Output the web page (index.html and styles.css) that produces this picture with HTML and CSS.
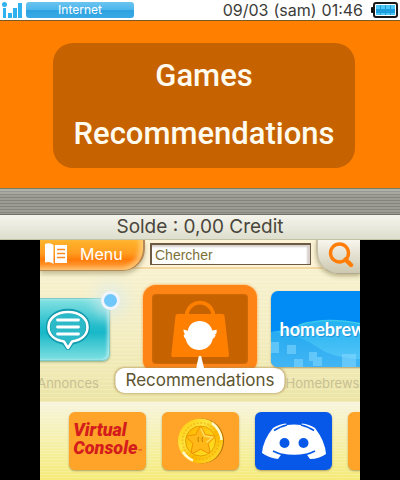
FILE: index.html
```html
<!DOCTYPE html>
<html lang="fr">
<head>
<meta charset="utf-8">
<meta name="viewport" content="width=device-width, initial-scale=1">
<title>Recommendations</title>
<link rel="stylesheet" href="styles.css">
</head>
<body>
<header class="status">
  <svg class="signal" viewBox="0 0 20 16" aria-hidden="true">
    <circle cx="2.5" cy="2.6" r="2.5"/>
    <path d="M1 6h3v10H1zM6 11h4v5H6zM11 6h4v10h-4zM16 1h4v15h-4z"/>
  </svg>
  <span class="network">Internet</span>
  <span class="clock"><span>09/03</span><span>(sam)</span><time>01:46</time></span>
  <svg class="battery" viewBox="0 0 27 16" aria-hidden="true">
    <rect x="0" y="5" width="4" height="6" rx="1" fill="#111"/>
    <rect x="3" y="1" width="23" height="14" rx="2" fill="#fff" stroke="#181818" stroke-width="2"/>
    <rect x="5" y="3" width="19" height="10" fill="#4cc8f8"/>
    <rect x="5" y="7" width="19" height="4" fill="#1b9fe0"/>
    <path d="M9.500 3v10M14.500 3v10M19.500 3v10" stroke="#2a9bd0" fill="none"/>
  </svg>
</header>

<section class="banner">
  <h1 class="banner-title"><span>Games</span><span>Recommendations</span></h1>
</section>
<div class="grille"></div>
<p class="balance">Solde : 0,00 Credit</p>

<main class="touch">
  <form class="toolbar">
    <button class="menu" type="button">
      <svg class="menu-icon" viewBox="0 0 22 21" aria-hidden="true">
        <path d="M0 1Q5 -1 8.500 2V21Q5 18 0 19.500z" fill="#fff"/>
        <path d="M10 2h12v18H10z" fill="#fff"/>
        <path d="M12 6.500h8M12 10.500h8M12 14.500h8" stroke="#ff8a20" stroke-width="1.300"/>
      </svg>
      <span>Menu</span>
    </button>
    <input class="query" type="text" placeholder="Chercher" aria-label="Chercher">
    <button class="search" type="submit" aria-label="Chercher">
      <svg class="search-icon" viewBox="0 0 26 26" aria-hidden="true">
        <circle cx="11.500" cy="11" r="9" fill="none" stroke="#ff7d08" stroke-width="3.400"/>
        <path d="M17.500 17.500l5.500 5.500" stroke="#ff7d08" stroke-width="4.400" stroke-linecap="round"/>
      </svg>
    </button>
  </form>

  <nav class="carousel">
    <a class="item news" href="#annonces">
      <span class="tile">
        <svg class="bubble" viewBox="0 0 44 42" aria-hidden="true">
          <path d="M18 34.500C9 33 2 27.500 2 19 2 9.500 11 3 22 3s20 6.500 20 16c0 8.500-7 14-16 15.500L22 40z" fill="#2cb9c8" stroke="#109aac" stroke-width="4.500"/>
          <path d="M18 33.500C9 32 2.500 27 2.500 19 2.500 10 11 4 22 4s19.500 6 19.500 15c0 8-6.500 13-15.500 14.500L22 40z" fill="none" stroke="#fff" stroke-width="2.600" stroke-linejoin="round"/>
          <path d="M11.500 12h21M11.500 19h21M11.500 26h21" stroke="#fff" stroke-width="2.800" stroke-linecap="round"/>
        </svg>
        <i class="dot"></i>
      </span>
      <span class="name">Annonces</span>
    </a>
    <a class="item current" href="#recommendations">
      <span class="tile">
        <svg class="bag" viewBox="0 0 58 60" aria-hidden="true">
          <path d="M16 18v-3.500a13.500 13.500 0 0 1 26 0V18" fill="none" stroke="#ff8000" stroke-width="3.800"/>
          <path d="M6.500 16h45q1.500 0 2 1.800L58 57q0 2-1.500 2h-55Q0 59 .3 57L4.500 17.800Q5 16 6.500 16z" fill="#ff8000"/>
          <path d="M12.500 31.500l4.300 1.200C18 26.500 22.500 23 28.500 23c6.500 0 11.500 4 12.800 9.500l4.400-.7q.6 3-1.700 5l.7.800q-1.200 2.200-3 3.500C40.500 47.500 35 52 28.500 52c-7.200 0-12.500-4.500-13.800-11q-2.200-1.200-2-3.800.7-.5 1.100-1.200-1.500-2-1.300-4.500z" fill="#fff"/>
        </svg>
      </span>
      <span class="name">Recommendations</span>
    </a>
    <a class="item brews" href="#homebrews">
      <span class="tile">
        <svg class="waves" viewBox="0 0 103 76" aria-hidden="true">
          <defs>
            <linearGradient id="sea" x1="0" y1="0" x2="0" y2="1">
              <stop offset="0" stop-color="#22b2f2"/><stop offset="1" stop-color="#5cc8f8"/>
            </linearGradient>
          </defs>
          <path d="M0 0h103v76H0z" fill="#008cf4"/>
          <path d="M0 41Q16 39 28 34 58 24 103 36V76H0z" fill="url(#sea)"/>
          <path d="M28 34Q60 24 103 36" fill="none" stroke="#3cc8ec" stroke-width="1.500"/>
          <path d="M0 41Q26 42 46 56T103 68V76H0z" fill="#1899ee" opacity=".4"/>
          <g fill="#8cdcff" opacity=".5">
            <path d="M0 51h8v11H0zM16 54h9v9h-9zM23 68h9v8h-9zM38 61h8v9h-8zM42 66h9v9h-9zM71 63h14v13H71z"/>
          </g>
        </svg>
        <span class="wordmark">homebrew</span>
      </span>
      <span class="name">Homebrews</span>
    </a>
  </nav>

  <nav class="shelf">
    <a class="app console" href="#virtual-console"><span>Virtual<br>Console<small>™</small></span></a>
    <a class="app" href="#coins" aria-label="Coins">
      <svg class="coin" viewBox="0 0 48 48" aria-hidden="true">
        <defs>
          <linearGradient id="rim" x1="0" y1="0" x2="1" y2="1">
            <stop offset="0" stop-color="#ffc400"/><stop offset=".35" stop-color="#ffe640"/>
            <stop offset=".6" stop-color="#ffb800"/><stop offset="1" stop-color="#ffe33a"/>
          </linearGradient>
          <linearGradient id="face" x1="0" y1="0" x2="1" y2="1">
            <stop offset="0" stop-color="#ffb400"/><stop offset="1" stop-color="#ffe428"/>
          </linearGradient>
        </defs>
        <circle cx="24.500" cy="24" r="22.500" fill="#a86a08"/>
        <circle cx="23.500" cy="24" r="22.500" fill="url(#rim)"/>
        <path d="M35 6q9 7 9.500 17M6 35q4 6 10 8.500" fill="none" stroke="#fffbd0" stroke-width="2.500"/>
        <circle cx="23.500" cy="24" r="18" fill="none" stroke="#d99a00" stroke-width="2" stroke-dasharray="2 1.500" opacity=".35"/>
        <circle cx="23.500" cy="24" r="15" fill="url(#face)" stroke="#d89400" stroke-width=".8"/>
        <path d="M23.500 9.500q1 0 4.700 8.300 8 .5 9.300 1.700 0 1-6.500 7 2.500 8 1.500 9.800-1.500.5-9-4.300-7 4.800-8.800 4.300-1-1.800 1.300-9.800-6.500-6-6.500-7 1.500-1.200 9.300-1.700 3.700-8.300 4.700-8.300z" fill="#ffb818" stroke="#f09000" stroke-linejoin="round"/>
        <path d="M24 11.500l3.500 7.500 8 1.300-6 5.200" fill="none" stroke="#ffe060" stroke-width="1.500"/>
        <path d="M21.500 20q-1 2.500 0 5M25.500 20q-1 2.500 0 5" fill="none" stroke="#c07c00"/>
      </svg>
    </a>
    <a class="app discord" href="#discord" aria-label="Discord">
      <svg class="face" viewBox="0 0 66 36" aria-hidden="true">
        <path d="M12 5Q18 1 25 .5L26 2Q33 1 40 2l1-1.500Q48 1 54 5 64 18 65 31 58 36 49 36l-4-5.500Q33 33 21 30.500L17 36Q8 35 1 30 2 17 12 5z" fill="#fff"/>
        <path d="M13 7.500Q18 4 26 2M53 7.500Q48 4 40 2M12 28q5 2.500 9 3.500M54 28q-5 2.500-9 3.500" fill="none" stroke="#0758e8" stroke-width="1.600"/>
        <circle cx="23.500" cy="20" r="5" fill="#0758e8"/><circle cx="42.500" cy="20" r="5" fill="#0758e8"/>
      </svg>
    </a>
    <a class="app" href="#more" aria-label="More"></a>
  </nav>
</main>
</body>
</html>
```
FILE: styles.css
```css
* { box-sizing: border-box; }

body {
  margin: 0;
  background: #000;
  font-family: Inter, "Liberation Sans", sans-serif;
  color: #3c3c38;
}

a { color: inherit; text-decoration: none; }
svg { display: block; flex: none; }
button { border: 0; padding: 0; font: inherit; cursor: pointer; }

/* Status bar */
.status {
  display: flex;
  align-items: center;
  gap: 4px;
  height: 21px;
  padding: 0 2px;
  background: #fff;
  border-bottom: 1px solid #7a5a20;
}
.signal { width: 20px; height: 16px; fill: #2fb2ee; }
.network {
  width: 108px;
  height: 16px;
  border-radius: 3px;
  background: linear-gradient(#6cc4f0, #4cb6ec 48%, #2da2e0 52%, #38aae6);
  color: #fff;
  font-size: 12px;
  line-height: 16px;
  text-align: center;
}
.clock {
  display: flex;
  gap: 5px;
  margin-left: auto;
  padding-right: 4px;
  font-size: 16px;
  line-height: 20px;
}
.battery { width: 27px; height: 16px; }

/* Upper screen */
.banner {
  padding: 22px 45px 20px 53px;
  background: #ff8000;
}
.banner-title {
  display: flex;
  flex-direction: column;
  gap: 18px;
  margin: 0;
  padding: 13px 0 14px;
  border-radius: 20px;
  background: #c66200;
  color: #fffbee;
  font-family: Roboto, sans-serif;
  font-size: 31px;
  font-weight: 500;
  line-height: 40px;
  text-align: center;
}
.grille {
  height: 27px;
  border-top: 1px solid #77805c;
  border-bottom: 1px solid #6c7068;
  background:
    linear-gradient(rgba(255, 255, 255, .25), transparent 30%),
    repeating-linear-gradient(#9c9c94 0 2px, #85857e 2px 3px);
}
.balance {
  margin: 0;
  background: linear-gradient(#f4f4ec, #dedece);
  border-bottom: 1px solid #c4c2a4;
  color: #4a463c;
  font-size: 19px;
  line-height: 24px;
  text-align: center;
}

/* Touch screen */
.touch {
  width: 80%;
  margin: 0 auto;
  overflow: hidden;
  background: #f3edbb;
}
.toolbar {
  position: relative;
  z-index: 1;
  display: flex;
  align-items: flex-start;
  gap: 5px;
  height: 29px;
  background: #fdf4d8;
  border-bottom: 2px solid #f3d8a0;
}
.menu {
  display: flex;
  align-items: center;
  gap: 13px;
  width: 105px;
  height: 31px;
  padding: 0 0 3px 5px;
  border-right: 2px solid #b48a58;
  border-bottom: 1px solid #b48a58;
  border-radius: 0 0 22px 0;
  background: linear-gradient(#ffb42c, #ff9c20 45%, #ff7c08 65%, #ffa848);
  box-shadow: inset -4px -2px 4px rgba(255, 214, 140, .7), 0 3px 4px rgba(120, 110, 60, .4);
  color: #fff;
  font-size: 16px;
}
.menu-icon { width: 22px; height: 21px; }
.query {
  flex: 1;
  min-width: 0;
  height: 22px;
  margin-top: 3px;
  padding: 0 3px;
  border: 1px solid #6c5a44;
  border-width: 2px 1px 1px 2px;
  border-radius: 0;
  background: #fff;
  box-shadow: inset -3px 2px 2px #d8d0cc;
  color: #7c7038;
  font: 14px "Liberation Sans", sans-serif;
}
.query::placeholder { color: #7c7038; opacity: 1; }
.search {
  display: grid;
  place-items: center;
  width: 44px;
  height: 34px;
  padding: 0 0 3px 4px;
  border-left: 2px solid #c8c0a4;
  border-bottom: 1px solid #b4ac90;
  border-radius: 0 0 0 22px;
  background: linear-gradient(#f8f6ee, #ccc8b0);
  box-shadow: 0 2px 4px rgba(120, 110, 60, .5);
}
.search-icon { width: 26px; height: 26px; }

.carousel {
  display: flex;
  justify-content: center;
  height: 133px;
  padding-top: 14px;
  overflow: hidden;
  background:
    repeating-linear-gradient(rgba(255, 255, 255, .2) 0 1px, transparent 1px 4px),
    linear-gradient(#f7f1cf, #f3edc0 50%, #ece5a6);
}
.item {
  position: relative;
  display: grid;
  grid-template-rows: 92px 16px;
  align-content: start;
  align-items: center;
  flex: none;
}
.tile {
  position: relative;
  display: grid;
  place-items: center;
}
.name {
  color: #c8c092;
  font-size: 13px;
  line-height: 16px;
  text-align: center;
}
.news { width: 84px; margin-right: 33px; }
.news .tile {
  height: 63px;
  border: 1px solid #7cccc8;
  border-radius: 7px;
  background: linear-gradient(#84e2e2, #22bccc 45%, #18b8c8 55%, #7ee0e2);
  box-shadow: inset -2px 0 3px rgba(255, 255, 255, .5), 0 1px 2px rgba(90, 130, 90, .6);
}
.bubble { width: 44px; height: 42px; }
.dot {
  position: absolute;
  top: -8px;
  right: -11px;
  width: 19px;
  height: 19px;
  border: 3px solid #f0f4fc;
  border-radius: 50%;
  background: #70c8fa;
  box-shadow: 0 0 14px 8px rgba(220, 236, 236, .6);
}
.current { width: 114px; margin-right: 14px; }
.current .tile {
  height: 88px;
  padding-bottom: 3px;
  border: 9px solid #ff8416;
  border-radius: 13px;
  background: #c66200;
  box-shadow: 0 0 3px #ff9838, inset 0 0 3px #d87410;
}
.bag { width: 58px; height: 60px; }
.current .name {
  position: absolute;
  top: 85px;
  left: 50%;
  padding: 0 10px;
  border-radius: 9px;
  background: #fff;
  box-shadow: 0 0 2px 1px rgba(170, 140, 80, .6);
  color: #5c5430;
  font-size: 17px;
  line-height: 25px;
  transform: translateX(-50%);
}
.current .name::before {
  content: "";
  position: absolute;
  bottom: 100%;
  left: 50%;
  width: 8px;
  height: 12px;
  margin-left: -4px;
  background: #fff;
  clip-path: polygon(36% 0, 64% 0, 100% 100%, 0 100%);
}
.brews { width: 103px; }
.brews .tile {
  height: 76px;
  border-radius: 7px;
  overflow: hidden;
  box-shadow: 0 1px 2px rgba(130, 110, 60, .6);
}
.waves, .wordmark { grid-area: 1 / 1; }
.waves { width: 103px; height: 76px; }
.wordmark {
  position: relative;
  color: #fff;
  font: bold 18px Lato, sans-serif;
  text-shadow: 1px 1px 1px #2090d8;
}

.shelf {
  display: flex;
  gap: 16px;
  height: 78px;
  padding: 10px 0 0 29px;
  background:
    repeating-linear-gradient(rgba(255, 255, 255, .15) 0 1px, transparent 1px 3px),
    linear-gradient(#f7f4dc, #f5ef9c 65%, #f5ea78);
}
.app {
  display: grid;
  place-items: center;
  flex: none;
  width: 77px;
  height: 58px;
  border-radius: 6px;
  background: #ffa428;
  box-shadow: 0 1px 2px rgba(130, 110, 60, .6);
}
.console {
  color: #d41c1c;
  font: italic 900 18px/18px Roboto, sans-serif;
}
.console small { font-size: 7px; font-weight: 400; }
.coin { width: 48px; height: 48px; }
.discord { background: #0758e8; }
.face { width: 66px; height: 36px; }
```
